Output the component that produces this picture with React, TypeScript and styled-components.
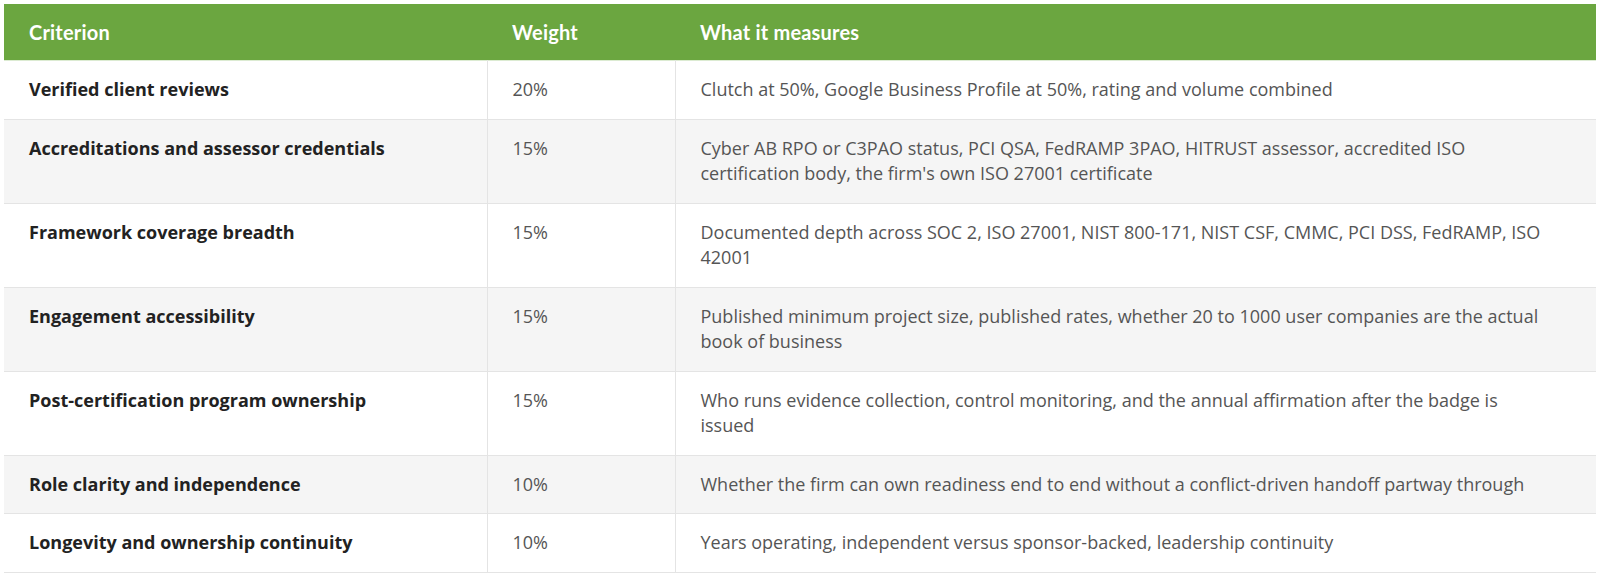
import { createGlobalStyle, styled } from 'styled-components';

const GlobalStyle = createGlobalStyle`
  body {
    margin: 0;
    padding: 4px;
    background: #ffffff;
    font-family: 'Open Sans', 'Liberation Sans', sans-serif;
  }
`;

const Table = styled.table`
  width: 1592px;
  border-collapse: collapse;
  table-layout: fixed;
`;

const HeadRow = styled.tr`
  background-color: #6ba640;
  border-bottom: 1px solid #dcebd2;
`;

const HeadCell = styled.th`
  height: 56px;
  padding: 0 25px;
  text-align: left;
  vertical-align: middle;
  color: #ffffff;
  font-family: Lato, 'Open Sans', sans-serif;
  font-size: 20px;
  font-weight: 700;
  letter-spacing: 0.2px;
`;

const Row = styled.tr<{ $striped: boolean }>`
  background-color: ${(p) => (p.$striped ? '#f5f5f5' : '#ffffff')};
  border-bottom: 1px solid #e4e4e4;
`;

const Cell = styled.td<{ $strong?: boolean; $wide?: boolean }>`
  padding: 16px ${(p) => (p.$wide ? '50px' : '25px')} 16px 25px;
  vertical-align: top;
  font-size: 18px;
  line-height: 25.5px;
  color: ${(p) => (p.$strong ? '#222222' : '#555555')};
  font-weight: ${(p) => (p.$strong ? 700 : 400)};
  & + & {
    border-left: 1px solid #e4e4e4;
  }
`;

const rows = [
  {
    criterion: 'Verified client reviews',
    weight: '20%',
    measures: 'Clutch at 50%, Google Business Profile at 50%, rating and volume combined',
  },
  {
    criterion: 'Accreditations and assessor credentials',
    weight: '15%',
    measures:
      "Cyber AB RPO or C3PAO status, PCI QSA, FedRAMP 3PAO, HITRUST assessor, accredited ISO certification body, the firm's own ISO 27001 certificate",
  },
  {
    criterion: 'Framework coverage breadth',
    weight: '15%',
    measures:
      'Documented depth across SOC 2, ISO 27001, NIST 800-171, NIST CSF, CMMC, PCI DSS, FedRAMP, ISO 42001',
  },
  {
    criterion: 'Engagement accessibility',
    weight: '15%',
    measures:
      'Published minimum project size, published rates, whether 20 to 1000 user companies are the actual book of business',
  },
  {
    criterion: 'Post-certification program ownership',
    weight: '15%',
    measures:
      'Who runs evidence collection, control monitoring, and the annual affirmation after the badge is issued',
  },
  {
    criterion: 'Role clarity and independence',
    weight: '10%',
    measures:
      'Whether the firm can own readiness end to end without a conflict-driven handoff partway through',
  },
  {
    criterion: 'Longevity and ownership continuity',
    weight: '10%',
    measures: 'Years operating, independent versus sponsor-backed, leadership continuity',
  },
];

export default function App() {
  return (
    <>
      <GlobalStyle />
      <Table>
        <colgroup>
          <col style={{ width: 483 }} />
          <col style={{ width: 188 }} />
          <col />
        </colgroup>
        <thead>
          <HeadRow>
            <HeadCell>Criterion</HeadCell>
            <HeadCell>Weight</HeadCell>
            <HeadCell>What it measures</HeadCell>
          </HeadRow>
        </thead>
        <tbody>
          {rows.map((r, i) => (
            <Row key={r.criterion} $striped={i % 2 === 1}>
              <Cell $strong>{r.criterion}</Cell>
              <Cell>{r.weight}</Cell>
              <Cell $wide>{r.measures}</Cell>
            </Row>
          ))}
        </tbody>
      </Table>
    </>
  );
}
